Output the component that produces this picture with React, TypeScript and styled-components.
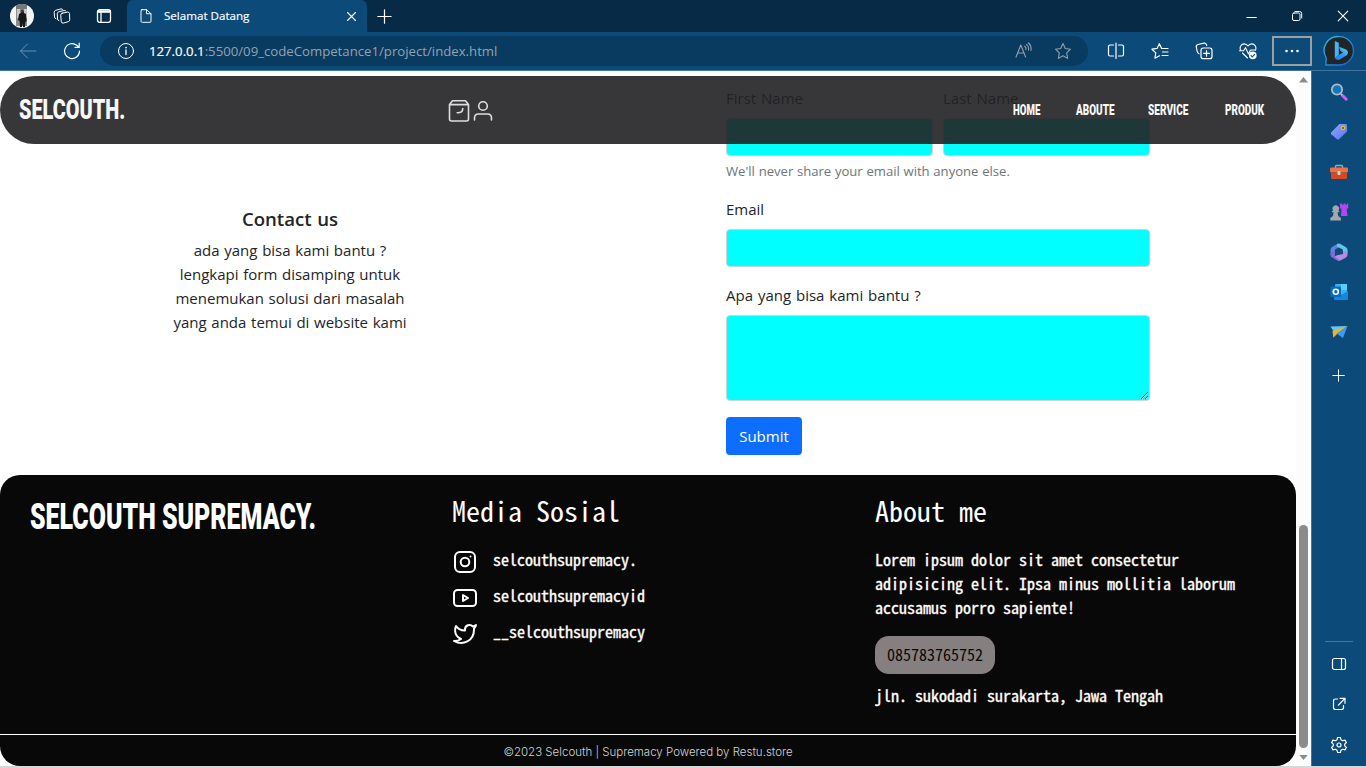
import React from "react";
import styled, { createGlobalStyle } from "styled-components";

const Global = createGlobalStyle`
  * { box-sizing: border-box; }
  body { margin: 0; overflow: hidden; font-family: "Open Sans", "Noto Sans", sans-serif; }
  p, h1, h2, h3, h5 { margin: 0; }
`;

/* ---------- browser chrome ---------- */
const Window = styled.div`
  width: 1366px;
  height: 768px;
  display: flex;
  flex-direction: column;
  background: #d7d7d7;
`;
const TabStrip = styled.header`
  height: 32px;
  flex: none;
  display: flex;
  background: #072a46;
  color: #fff;
`;
const Cell = styled.div<{ $w: number; $h?: number }>`
  width: ${(p) => p.$w}px;
  height: ${(p) => (p.$h ? p.$h + "px" : "auto")};
  flex: none;
  display: flex;
  align-items: center;
  justify-content: center;
`;
const Tab = styled.div`
  width: 240px;
  display: flex;
  align-items: center;
  background: #0c4a7a;
  border-radius: 6px 6px 0 0;
  padding: 0 10px 0 12px;
  font-size: 11.6px;
  line-height: 16px;
`;
const TabTitle = styled.span`
  flex: 1;
  margin-left: 11px;
  -webkit-text-stroke: 0.15px #fff;
`;
const Spacer = styled.div`
  flex: 1;
`;
const Toolbar = styled.div`
  height: 39px;
  flex: none;
  display: flex;
  background: #0c4a7a;
  border-bottom: 1px solid #3f76a0;
  padding: 4px 0 4px 6px;
  color: #fff;
`;
const Address = styled.div`
  width: 988px;
  height: 30px;
  margin-left: 6px;
  border-radius: 15px;
  background: #093a60;
  display: flex;
  align-items: center;
  padding: 0 5px 0 16px;
`;
const Url = styled.span`
  flex: 1;
  margin-left: 13px;
  font-size: 13.2px;
  line-height: 18px;
  color: #93a3b0;
  white-space: nowrap;
  b { font-weight: 400; color: #fff; -webkit-text-stroke: 0.2px #fff; }
`;
const MoreButton = styled.div`
  width: 40px;
  height: 30px;
  border: 2px solid #9d9fa1;
  display: flex;
  align-items: center;
  justify-content: center;
  margin-left: 2px;
`;
const Main = styled.div`
  height: 695px;
  display: flex;
`;
const Sidebar = styled.aside`
  width: 55px;
  flex: none;
  background: #0c4a7a;
  border-left: 1px solid #3f76a0;
  display: flex;
  flex-direction: column;
  align-items: center;
  padding: 1px 1px 0 0;
  color: #fff;
`;
const Separator = styled.div`
  width: 28px;
  height: 1px;
  background: #4179a2;
  margin-bottom: 2px;
`;
const ScrollTrack = styled.div`
  width: 15px;
  flex: none;
  background: #fcfcfc;
  display: flex;
  flex-direction: column;
  align-items: center;
  padding: 5px 0 4px;
`;
const Thumb = styled.div`
  width: 9px;
  height: 223px;
  border-radius: 5px;
  background: #8b8b8b;
  margin-bottom: 5px;
`;

/* ---------- web page ---------- */
const Page = styled.main`
  position: relative;
  width: 1296px;
  flex: none;
  background: #fff;
  overflow: hidden;
`;
const Navbar = styled.nav`
  position: absolute;
  top: 5px;
  left: 0;
  width: 1296px;
  height: 68px;
  border-radius: 34px;
  background: rgba(33, 33, 35, 0.9);
  display: flex;
  align-items: center;
  color: #f8f8f8;
`;
const Condensed = styled.span<{ $size: number; $scale: number; $w: number }>`
  display: block;
  width: ${(p) => p.$w}px;
  flex: none;
  font: 900 ${(p) => p.$size}px/1 Roboto, sans-serif;
  white-space: nowrap;
  transform: scaleX(${(p) => p.$scale});
  transform-origin: left center;
`;
const NavIcons = styled.div`
  display: flex;
  margin-left: 304px;
  width: 566px;
  padding-top: 2px;
`;
const Contact = styled.section`
  height: 404px;
  display: flex;
`;
const Intro = styled.div`
  width: 580px;
  padding-top: 136px;
  text-align: center;
  color: #212529;
  font-size: 15px;
  line-height: 24px;
  word-spacing: 0.8px;
`;
const IntroTitle = styled.h5`
  font: 600 18.6px/24px "Open Sans", sans-serif;
  margin-bottom: 7px;
`;
const Form = styled.form`
  margin-left: 146px;
  width: 424px;
  padding-top: 15px;
  display: flex;
  flex-direction: column;
  align-items: flex-start;
  color: #212529;
`;
const NameRow = styled.div`
  display: flex;
  gap: 10px;
  width: 100%;
`;
const Field = styled.div`
  flex: 1;
  width: 100%;
`;
const Label = styled.label`
  display: block;
  font-size: 15px;
  line-height: 24px;
  margin-bottom: 8px;
  word-spacing: 1px;
`;
const Input = styled.input`
  display: block;
  width: 100%;
  height: 38px;
  border: 1px solid #ced4da;
  border-radius: 4px;
  background: aqua;
  padding: 6px 12px;
`;
const TextArea = styled.textarea`
  display: block;
  width: 100%;
  height: 86px;
  border: 1px solid #ced4da;
  border-radius: 4px;
  background: aqua;
  resize: vertical;
`;
const Hint = styled.div`
  margin: 5px 0 15px;
  font-size: 13.1px;
  line-height: 21px;
  word-spacing: 0.3px;
  color: #6c757d;
`;
const Group = styled.div`
  width: 100%;
  margin-bottom: 16px;
`;
const Submit = styled.button`
  width: 76px;
  height: 38px;
  border: 0;
  border-radius: 4px;
  background: #0d6efd;
  color: #fff;
  font: 15px/24px "Open Sans", sans-serif;
  padding: 0;
`;
const Footer = styled.footer`
  height: 291px;
  border-radius: 20px;
  background: #080808;
  color: #fff;
  overflow: hidden;
  display: flex;
  flex-direction: column;
  font-family: "Noto Sans CJK JP", monospace;
  font-feature-settings: "hwid";
`;
const FooterColumns = styled.div`
  height: 259px;
  flex: none;
  display: grid;
  grid-template-columns: 422px 423px 1fr;
  padding: 18px 0 0 30px;
`;
const FooterTitle = styled.h3`
  font-size: 28px;
  font-weight: 400;
  line-height: 34px;
  margin-bottom: 20px;
  white-space: nowrap;
`;
const FooterBrand = styled.div`
  padding-top: 5px;
`;
const Social = styled.div`
  height: 36px;
  display: flex;
  align-items: flex-start;
  gap: 15px;
  font-size: 16px;
  line-height: 24px;
  -webkit-text-stroke: 0.35px #fff;
  svg { margin-top: 2px; }
`;
const Paragraph = styled.p`
  font-size: 16px;
  line-height: 24px;
  white-space: pre-line;
  -webkit-text-stroke: 0.35px #fff;
`;
const Phone = styled.div`
  width: 120px;
  height: 38px;
  margin: 17px 0 9px;
  border-radius: 14px;
  background: #857f7f;
  color: #080808;
  font-size: 16px;
  line-height: 36px;
  text-align: center;
`;
const Copyright = styled.div`
  height: 32px;
  border-top: 1px solid #fff;
  text-align: center;
  font: 300 11.5px/34px Inter, sans-serif;
  color: #d5d5d5;
`;

type IconProps = { s: number; w?: number; c?: string; box?: string; children: React.ReactNode };
const Icon = ({ s, w = 1, c = "currentColor", box, children }: IconProps) => (
  <svg width={s} height={s} viewBox={box || `0 0 ${s} ${s}`} fill="none" stroke={c} strokeWidth={w} strokeLinecap="round" strokeLinejoin="round">
    {children}
  </svg>
);

const Avatar = () => (
  <Icon s={24}>
    <clipPath id="av"><circle cx="12" cy="12" r="12" /></clipPath>
    <g clipPath="url(#av)" stroke="none">
      <path fill="#f4f4f4" d="M0 0h24v24H0z" />
      <path fill="#8d8d8d" d="M6 0h11v22H6z" />
      <path fill="#c9c9c9" d="M7 5h3v9H7zM14 4h3v10h-3z" />
      <path fill="#777" d="M6 0h11v5H6z" />
      <path fill="#171717" d="M9 10l2-1V7h3v2l2 1 .6 7-1.2 1-.4 5h-2l-.4-4-.6 4h-2l-.4-6L8 16z" />
      <circle fill="#4e3b36" cx="12.3" cy="7.2" r="1.6" />
    </g>
  </Icon>
);
const Bing = () => (
  <Icon s={32}>
    <defs>
      <linearGradient id="bg1" x1="0" y1="0" x2="1" y2="1"><stop stopColor="#28c4e8" /><stop offset="1" stopColor="#1f5bd6" /></linearGradient>
      <linearGradient id="bg2" x1="0" y1="1" x2="1" y2="0"><stop stopColor="#2b7cf0" /><stop offset=".45" stopColor="#2f93f3" /><stop offset="1" stopColor="#55e0d8" /></linearGradient>
    </defs>
    <path d="M16.500 1.600a14 14 0 1 1-.5 28.400H2.800l.5-7A14 14 0 0 1 16.500 1.600z" fill="#222426" stroke="url(#bg1)" strokeWidth="1.300" />
    <path d="M11.800 6l4 1.700v12l-4 3.600z" fill="#43b3fa" stroke="none" />
    <path d="M11.800 22.500l4-2.500 4.200-2.600-2.500-1.400-1.500-4.200 6.500 2.500c3.500 1.500 2.800 5 .8 6.300l-6.500 4c-2.200 1-4.500-.2-5-2.100z" fill="url(#bg2)" stroke="none" />
  </Icon>
);

const SideSearch = () => (
  <Icon s={20}>
    <path d="M12.500 12.500l2 2" stroke="#c9c9c9" strokeWidth="2" />
    <path d="M14 14l3.200 3.200" stroke="#d35cf5" strokeWidth="3" />
    <circle cx="8" cy="7.500" r="5.200" fill="#0f78bd" stroke="#b9bcbd" strokeWidth="1.700" />
  </Icon>
);
const SideTag = () => (
  <Icon s={20}>
    <linearGradient id="tg" x1="0" y1="0" x2="1" y2="1"><stop stopColor="#8fa9ff" /><stop offset="1" stopColor="#5a72f0" /></linearGradient>
    <path d="M10.500 2h6.500l1 1v6.500L10 17.300q-1 .8-2 0L2.300 12.200q-.8-1 0-2z" fill="url(#tg)" stroke="none" />
    <circle cx="14" cy="6" r="1.700" stroke="#e5c21c" strokeWidth="1.300" fill="#5a5530" />
  </Icon>
);
const SideTools = () => (
  <Icon s={20}>
    <path d="M6.500 6V4.500q0-1 1-1h5q1 0 1 1V6" stroke="#a3a9ab" strokeWidth="1.400" />
    <rect x="1" y="5.500" width="18" height="5" rx="1" fill="#f0703f" stroke="none" />
    <path d="M2 10.500h16v5.500q0 1-1 1H3q-1 0-1-1z" fill="#d9471f" stroke="none" />
    <rect x="8.500" y="9" width="3" height="4" rx="1" fill="#d5d5d5" stroke="none" />
  </Icon>
);
const SideGames = () => (
  <Icon s={20}>
    <path d="M11 1.500h2v1.300h1.500V1.500h2v1.300H18V1.500h1.200V6l-1.500 1 .8 7H12l.5-7L11 6z" fill="#b445f0" stroke="none" />
    <path d="M4.300 8.500a3.200 3.200 0 1 1 5 0l1 .8v1H8.600l.6 3.700 2.700 2v2.500H1.300V16l2.700-2 .6-3.700H3v-1z" fill="#a6a7a9" stroke="none" />
  </Icon>
);
const Side365 = () => (
  <Icon s={20}>
    <path d="M9 1.500L3 5Q1.500 6 1.500 8v4q0 2 1.500 3l3 1.600V7.500L12 4z" fill="#5c83dd" stroke="none" />
    <path d="M8 1.800h3l6 3.400q1.500 1 1.500 3v2.500l-4.700-1.500V7.400L8 4.600z" fill="#62c7ee" stroke="none" />
    <path d="M18.500 9v3.500q0 2-1.500 3l-5.500 3q-1.500.7-3 0L4 15.600l4-2.300 6-1.200V9z" fill="#b68be4" stroke="none" />
    <path d="M6 7.500v7.500l5 3.500-2 .2L2.500 15q-1-1-1-3z" fill="#8169cc" stroke="none" />
  </Icon>
);
const SideOutlook = () => (
  <Icon s={20}>
    <rect x="6" y="2" width="12" height="11" rx="1" fill="#35b8f1" stroke="none" />
    <path d="M12 2h6v6h-6z" fill="#56d2fa" stroke="none" />
    <path d="M5 9l7 4 7-4v8q0 1-1 1H6q-1 0-1-1z" fill="#1587db" stroke="none" />
    <rect x="1.500" y="4.500" width="10.500" height="10.500" rx="1" fill="#0a6cc0" stroke="none" />
    <circle cx="6.800" cy="9.700" r="2.500" stroke="#fff" strokeWidth="1.600" />
  </Icon>
);
const SideDrop = () => (
  <Icon s={20}>
    <path d="M1.500 4.500L18.500 4 5 10z" fill="#67c5f5" stroke="none" />
    <path d="M18.500 4L3.500 9l.8 6.800 3.700-3.800z" fill="#f5b31b" stroke="none" />
    <path d="M18.500 4L7.500 11.500l6.500 4.500z" fill="#3a9bf0" stroke="none" />
  </Icon>
);

export default function App() {
  return (
    <Window>
      <Global />
      <TabStrip>
        <Cell $w={44}><Avatar /></Cell>
        <Cell $w={36}>
          <Icon s={18}>
            <path d="M9.200 6.200l5.300-1.100q1.700-.2 2 1.400l.2 6.300q0 1.500-1.400 1.900l-5 1.400q-1.700.3-2-1.300L7.700 8.200q-.1-1.600 1.500-2z" />
            <path d="M5.800 13.600Q4.600 13.300 4.500 12L4.300 6.700q0-1.500 1.500-1.900l5.400-1.300q1.300-.2 1.800.6M2.900 11.800Q1.600 11.500 1.500 10L1.200 5.200q0-1.500 1.500-1.900L8 1.900q1.300-.2 1.700.6" />
          </Icon>
        </Cell>
        <Cell $w={47}>
          <Icon s={16} w={1.300}><rect x="1.500" y="1.700" width="13" height="12.600" rx="2.200" /><path d="M1.500 4h13M5 5v9" /><path d="M2 3.300h12" strokeWidth="2" /></Icon>
        </Cell>
        <Tab>
          <Icon s={14}><path d="M2.500.7h5L12 5v8q0 1-1 1H3.500q-1.500 0-1.500-1V2q0-1.300 1.300-1.300M7.500.7V5H12" transform="scale(1 .95)" /></Icon>
          <TabTitle>Selamat Datang</TabTitle>
          <Icon s={11} w={1.100}><path d="M1.500 1.500l8 8M9.500 1.500l-8 8" /></Icon>
        </Tab>
        <Cell $w={35}><Icon s={15} w={1.200}><path d="M7.500.8v13.400M.8 7.500h13.400" /></Icon></Cell>
        <Spacer />
        <Cell $w={46}><Icon s={11}><path d="M.8 6.500h9.500" /></Icon></Cell>
        <Cell $w={46}><Icon s={12}><rect x="1.500" y="3" width="7.500" height="7.500" rx="1.500" /><path d="M4 1.500h4.500q2.200 0 2.200 2.200V8" /></Icon></Cell>
        <Cell $w={46}><Icon s={12} w={1.100}><path d="M1.200 1.200l9.600 9.600M10.800 1.200l-9.600 9.600" /></Icon></Cell>
      </TabStrip>
      <Toolbar>
        <Cell $w={44}><Icon s={18} c="#6690b2"><path d="M17 9H1.500M8.500 2L1.500 9l7 7" /></Icon></Cell>
        <Cell $w={44}><Icon s={18} w={1.200}><path d="M16.500 9.200A7.500 7.500 0 1 1 13.800 3.300L16 5.200M16.200 1.200v4.200H12" /></Icon></Cell>
        <Address>
          <Icon s={20}><circle cx="10" cy="10" r="7.500" /><path d="M10 9v4.500" strokeWidth="1.300" /><path d="M10 6.600v.1" strokeWidth="1.600" /></Icon>
          <Url><b>127.0.0.1</b>:5500/09_codeCompetance1/project/index.html</Url>
          <Cell $w={40}><Icon s={18} c="#91a0ad" w={1.100}><path d="M2 15L6.800 3l4.800 12M3.600 11h6.400" /><path d="M10.700 4.200q1.600 1.300 1.200 3.500M12.500 2.400q2.700 2 2 5.800M14.300 .8q3.300 2.600 2.700 7.700" /></Icon></Cell>
          <Cell $w={40}><Icon s={18} w={1.100} c="#91a0ad"><path d="M9 1.500l2.300 5 5.200.7-3.800 3.700.9 5.500L9 13.700l-4.600 2.700.9-5.500L1.500 7.200l5.200-.7z" /></Icon></Cell>
        </Address>
        <Cell $w={6} />
        <Cell $w={44}><Icon s={18} w={1.200}><path d="M6.500 3H3Q1.500 3 1.500 4.500v8Q1.500 14 3 14h3.500M11.500 3H15q1.500 0 1.500 1.500v8q0 1.500-1.500 1.500h-3.500M9 1v15.500" /></Icon></Cell>
        <Cell $w={44}><Icon s={18} w={1.200}><path d="M10.500 6.300L8.300 1.700 6.200 6.300 1 7.200l3.800 3.700-.9 5.300 4.600-2.400M11 6.500h6M11.500 10h5.500M11 13.500h6" /></Icon></Cell>
        <Cell $w={44}><Icon s={18} w={1.200}><rect x="6" y="6" width="11" height="10.700" rx="2.300" /><path d="M11.500 8.500v5.700M8.700 11.400h5.700M4 11.800Q2.500 11 2.200 9.500L1.300 5q-.3-2 1.600-2.500L9 1.200q1.800-.3 2.400 1.300l.3 1" /></Icon></Cell>
        <Cell $w={44}><Icon s={18} w={1.100}><path d="M16.500 8.200q1-2.500-.3-4.500C14.500 1.200 11 1.200 9 4 7 1.200 3.400 1.200 1.800 3.700.9 5 1 6.500 1.500 8M3.500 11L8.500 16M.5 8.700h4l2-3 3 6.300 2-4h5" /><circle cx="13.800" cy="13.400" r="3.800" fill="#fff" stroke="none" /><path d="M12 13.600l1.300 1.300 2.300-2.600" stroke="#0c4a7a" /></Icon></Cell>
        <MoreButton><Icon s={16}><g fill="#fff" stroke="none"><circle cx="2.500" cy="8" r="1.300" /><circle cx="8" cy="8" r="1.300" /><circle cx="13.500" cy="8" r="1.300" /></g></Icon></MoreButton>
        <Cell $w={54}><Bing /></Cell>
      </Toolbar>
      <Main>
        <Page>
          <Contact>
            <Intro>
              <IntroTitle>Contact us</IntroTitle>
              <p>ada yang bisa kami bantu ?<br />lengkapi form disamping untuk<br />menemukan solusi dari masalah<br />yang anda temui di website kami</p>
            </Intro>
            <Form>
              <NameRow>
                <Field><Label>First Name</Label><Input /></Field>
                <Field><Label>Last Name</Label><Input /></Field>
              </NameRow>
              <Hint>We'll never share your email with anyone else.</Hint>
              <Group><Label>Email</Label><Input /></Group>
              <Group><Label>Apa yang bisa kami bantu ?</Label><TextArea /></Group>
              <Submit type="button">Submit</Submit>
            </Form>
          </Contact>
          <Footer>
            <FooterColumns>
              <FooterBrand>
                <Condensed as="h2" $size={37} $scale={0.674} $w={285}>SELCOUTH SUPREMACY.</Condensed>
              </FooterBrand>
              <div>
                <FooterTitle>Media Sosial</FooterTitle>
                <Social>
                  <Icon s={26} w={2} box="-1 -1 26 26"><rect x="2" y="2" width="20" height="20" rx="5" /><circle cx="12" cy="12" r="4.300" /><path d="M17.500 6.500v.01" /></Icon>
                  selcouthsupremacy.
                </Social>
                <Social>
                  <Icon s={26} w={2} box="-1 -1 26 26"><rect x="1" y="4" width="22" height="16" rx="3.500" /><path d="M10 9v6l5-3z" /></Icon>
                  selcouthsupremacyid
                </Social>
                <Social>
                  <Icon s={26} w={2} box="-1 -1 26 26"><path d="M23 3a10.900 10.900 0 0 1-3.140 1.530 4.480 4.480 0 0 0-7.860 3v1A10.660 10.660 0 0 1 3 4s-4 9 5 13a11.640 11.640 0 0 1-7 2c9 5 20 0 20-11.500a4.500 4.500 0 0 0-.08-.83A7.720 7.720 0 0 0 23 3z" /></Icon>
                  __selcouthsupremacy
                </Social>
              </div>
              <div>
                <FooterTitle>About me</FooterTitle>
                <Paragraph>{"Lorem ipsum dolor sit amet consectetur\nadipisicing elit. Ipsa minus mollitia laborum\naccusamus porro sapiente!"}</Paragraph>
                <Phone>085783765752</Phone>
                <Paragraph>jln. sukodadi surakarta, Jawa Tengah</Paragraph>
              </div>
            </FooterColumns>
            <Copyright>©2023 Selcouth | Supremacy Powered by Restu.store</Copyright>
          </Footer>
          <Navbar>
            <Cell $w={19} />
            <Condensed $size={28} $scale={0.71} $w={124}>SELCOUTH.</Condensed>
            <NavIcons>
              <Icon s={24} w={1.600} c="#dedede"><path d="M5.500 1.700h13l3 3.800V20q0 2-2 2h-15q-2 0-2-2V5.500zM2.500 5.600h19M15.800 9.500q0 4.500-5.600 4.300" /></Icon>
              <Icon s={24} w={1.600} c="#dedede"><circle cx="12" cy="7" r="4.300" /><path d="M3.500 21v-2q0-4 4-4h9q4 0 4 4v2" /></Icon>
            </NavIcons>
            <Condensed $size={14} $scale={0.69} $w={63}>HOME</Condensed>
            <Condensed $size={14} $scale={0.71} $w={72}>ABOUTE</Condensed>
            <Condensed $size={14} $scale={0.72} $w={77}>SERVICE</Condensed>
            <Condensed $size={14} $scale={0.71} $w={40}>PRODUK</Condensed>
          </Navbar>
        </Page>
        <ScrollTrack>
          <Icon s={9}><path d="M4.500 1L9 6.500H0z" fill="#8b8b8b" stroke="none" /></Icon>
          <Spacer />
          <Thumb />
          <Icon s={9}><path d="M4.500 7L.3 2h8.400z" fill="#8b8b8b" stroke="none" /></Icon>
        </ScrollTrack>
        <Sidebar>
          <Cell $w={40} $h={40}><SideSearch /></Cell>
          <Cell $w={40} $h={40}><SideTag /></Cell>
          <Cell $w={40} $h={40}><SideTools /></Cell>
          <Cell $w={40} $h={40}><SideGames /></Cell>
          <Cell $w={40} $h={40}><Side365 /></Cell>
          <Cell $w={40} $h={40}><SideOutlook /></Cell>
          <Cell $w={40} $h={40}><SideDrop /></Cell>
          <Cell $w={40} $h={46}><Icon s={13}><path d="M6.500.8v11.500M.8 6.500h11.500" /></Icon></Cell>
          <Spacer />
          <Separator />
          <Cell $w={40} $h={40}><Icon s={16} w={1.200}><rect x="1.500" y="2.500" width="13" height="11" rx="2" /><path d="M10.500 2.500v11" /></Icon></Cell>
          <Cell $w={40} $h={40}><Icon s={16} w={1.200}><path d="M6.500 3H4.500Q2.500 3 2.500 5v6.500q0 2 2 2h6q2 0 2-2V9.500M9 2.300h5v5M14 2.300L7.500 9" /></Icon></Cell>
          <Cell $w={40} $h={42}><Icon s={18} w={1.200}><path d="M7.600 1.500h2.800l.6 2.300 1.700 1 2.300-.7 1.400 2.400-1.700 1.700v1.600l1.700 1.700-1.400 2.400-2.300-.7-1.700 1-.6 2.300H7.600L7 14.200l-1.700-1-2.300.7-1.400-2.400 1.700-1.700V8.200L1.600 6.500 3 4.100l2.300.7 1.700-1z" /><circle cx="9" cy="9" r="2" /></Icon></Cell>
        </Sidebar>
      </Main>
    </Window>
  );
}
